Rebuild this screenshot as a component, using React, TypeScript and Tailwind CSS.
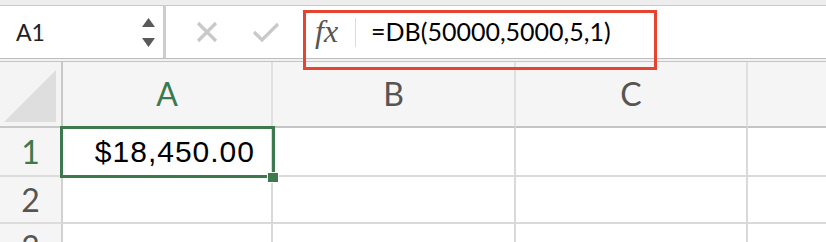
import React from "react";

const hdrFont = { fontFamily: "Lato, 'Open Sans', sans-serif" };

export default function App() {
  const cols = ["A", "B", "C", ""];
  return (
    <div className="relative w-[826px] h-[242px] overflow-hidden bg-white" style={{ fontFamily: "'Liberation Sans', Arial, sans-serif" }}>
      {/* top toolbar */}
      <div className="h-[5px] bg-[#eeeeee]" />
      <div className="h-px bg-[#c9c9c9]" />
      <div className="h-[52px] flex bg-white">
        <div className="w-[166px] flex items-center border-r-[3px] border-[#cdcdcd] pl-4 pr-[8px]">
          <span className="text-[23px] text-[#222]" style={hdrFont}>A1</span>
          <div className="ml-auto flex flex-col gap-[11px] items-center">
            <svg width="13" height="9" viewBox="0 0 13 9"><path d="M6.5 0 L13 9 L0 9 Z" fill="#5a5a5a" /></svg>
            <svg width="13" height="9" viewBox="0 0 13 9"><path d="M0 0 L13 0 L6.5 9 Z" fill="#5a5a5a" /></svg>
          </div>
        </div>
        <div className="flex items-center pl-[30px] gap-[34px]">
          <svg width="22" height="22" viewBox="0 0 22 22"><path d="M2 2 L20 20 M20 2 L2 20" stroke="#c9c9c9" strokeWidth="3.2" /></svg>
          <svg width="28" height="22" viewBox="0 0 28 22"><path d="M2 11 L10 19 L26 3" stroke="#c9c9c9" strokeWidth="3.2" fill="none" /></svg>
        </div>
        <div className="flex items-center pl-[35px]">
          <span className="italic text-[32px] text-[#555] leading-none -mt-[2px]" style={{ fontFamily: "'Liberation Serif', 'DejaVu Serif', serif" }}>fx</span>
          <div className="ml-[17px] w-px h-[29px] bg-[#dcdcdc]" />
          <span className="ml-[15px] text-[25px] text-black" style={hdrFont}>=DB(50000,5000,5,1)</span>
        </div>
      </div>
      <div className="h-px bg-[#bdbdbd]" />
      <div className="h-[2px] bg-[#f2f2f2]" />
      <div className="h-px bg-[#c4c4c4]" />

      {/* grid */}
      <div className="grid grid-cols-[63px_210px_243px_232px_1fr] grid-rows-[66px_49px_47px_47px]">
        {/* corner */}
        <div className="relative bg-[#f4f4f4] border-r-2 border-b-2 border-[#c8c8c8]">
          <svg className="absolute right-[5px] bottom-[4px]" width="52" height="52" viewBox="0 0 52 52"><path d="M52 0 L52 52 L0 52 Z" fill="#dedede" /></svg>
        </div>
        {cols.map((c, i) => (
          <div
            key={"h" + i}
            className={`flex items-center justify-center bg-[#f5f5f5] border-b-2 border-[#c4c4c4] ${i < 3 ? "border-r-2 border-r-[#e0e0e0]" : ""} text-[32px] ${c === "A" ? "text-[#3c7a4e]" : "text-[#555]"}`}
            style={hdrFont}
          >
            {c}
          </div>
        ))}
        {[1, 2, 3].map((r) => (
          <React.Fragment key={r}>
            <div
              className={`flex items-center justify-center bg-[#f5f5f5] border-r-2 border-r-[#d2d2d2] border-b-2 border-b-[#dcdcdc] text-[32px] ${r === 1 ? "text-[#3c7a4e]" : "text-[#555]"}`}
              style={hdrFont}
            >
              {r}
            </div>
            {[0, 1, 2, 3].map((c) => (
              <div
                key={c}
                className={`flex items-center justify-end pr-[16px] border-b-2 border-[#d9d9d9] ${c < 3 ? "border-r-2" : ""} text-[30px] tracking-[1px] text-black`}
              >
                {r === 1 && c === 0 ? "$18,450.00" : ""}
              </div>
            ))}
          </React.Fragment>
        ))}
      </div>

      {/* selection */}
      <div className="absolute left-[60px] top-[126px] w-[215px] h-[52px] border-[3px] border-[#3c7a4e]" />
      <div className="absolute left-[267px] top-[172px] w-[10px] h-[9px] bg-[#3c7a4e] border border-white box-content" />

      {/* red highlight */}
      <div className="absolute left-[303px] top-[10px] w-[354px] h-[60px] border-[3px] border-[#e5442f]" />
    </div>
  );
}
